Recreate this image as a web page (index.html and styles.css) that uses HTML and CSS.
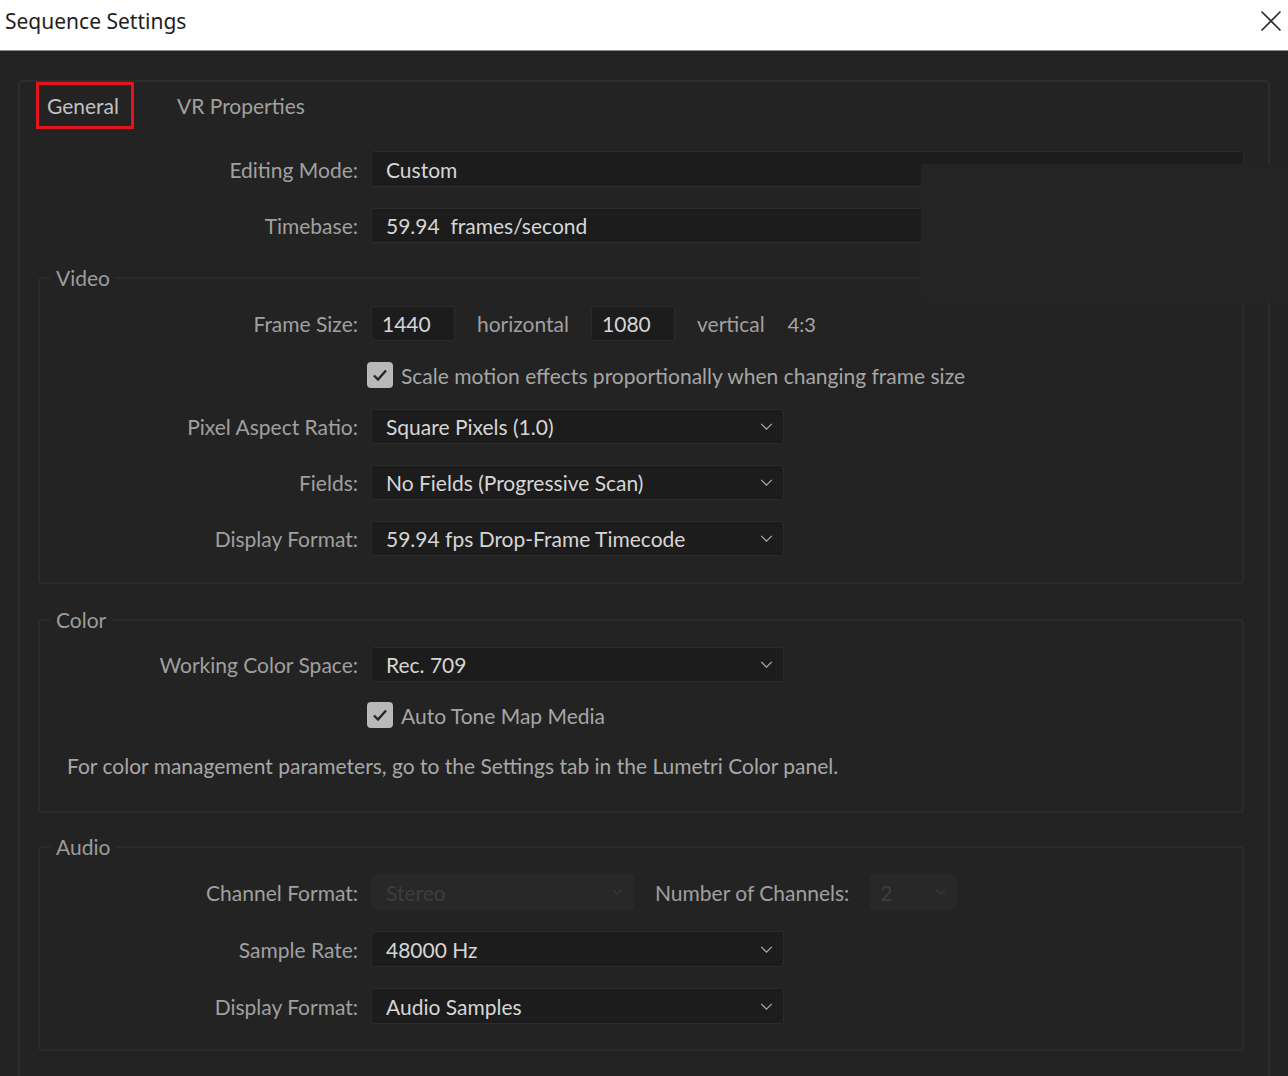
FILE: index.html
```html
<!DOCTYPE html>
<html lang="en">
<head>
    <meta charset="UTF-8">
    <meta name="viewport" content="width=device-width, initial-scale=1.0">
    <title>Sequence Settings</title>
    <link rel="stylesheet" href="styles.css">
</head>
<body>

    <div class="titlebar">
        <span class="title">Sequence Settings</span>
        <svg class="close" width="22" height="22" viewBox="0 0 22 22">
            <path d="M1.5 1.5 L20.5 20.5 M20.5 1.5 L1.5 20.5" stroke="#2b2b2b" stroke-width="1.6" fill="none"/>
        </svg>
    </div>

    <div class="main">
        <div class="panel">
            <div class="tabs">
                <span class="tab active">General</span>
                <span class="tab">VR Properties</span>
            </div>

            <div class="top-rows">
                <div class="row">
                    <label class="label">Editing Mode:</label>
                    <div class="field wide">Custom</div>
                </div>
                <div class="row">
                    <label class="label">Timebase:</label>
                    <div class="field wide timebase">59.94&nbsp; frames/second</div>
                </div>
            </div>

            <fieldset class="group">
                <legend>Video</legend>
                <div class="row">
                    <label class="label">Frame Size:</label>
                    <div class="field num">1440</div>
                    <span class="unit">horizontal</span>
                    <div class="field num">1080</div>
                    <span class="unit">vertical</span>
                    <span class="ratio">4:3</span>
                </div>
                <div class="row check-row">
                    <span class="check"><svg width="16" height="14" viewBox="0 0 16 14"><path d="M2 7.5 L6 11.5 L14 2.5" stroke="#262626" stroke-width="2.4" fill="none"/></svg></span>
                    <span class="check-text">Scale motion effects proportionally when changing frame size</span>
                </div>
                <div class="row">
                    <label class="label">Pixel Aspect Ratio:</label>
                    <div class="field select">Square Pixels (1.0)<svg class="chev" width="13" height="7" viewBox="0 0 14 8"><path d="M1 1 L7 7 L13 1" stroke="#a8a8a8" stroke-width="1.5" fill="none"/></svg></div>
                </div>
                <div class="row">
                    <label class="label">Fields:</label>
                    <div class="field select">No Fields (Progressive Scan)<svg class="chev" width="13" height="7" viewBox="0 0 14 8"><path d="M1 1 L7 7 L13 1" stroke="#a8a8a8" stroke-width="1.5" fill="none"/></svg></div>
                </div>
                <div class="row">
                    <label class="label">Display Format:</label>
                    <div class="field select">59.94 fps Drop-Frame Timecode<svg class="chev" width="13" height="7" viewBox="0 0 14 8"><path d="M1 1 L7 7 L13 1" stroke="#a8a8a8" stroke-width="1.5" fill="none"/></svg></div>
                </div>
            </fieldset>

            <fieldset class="group color">
                <legend>Color</legend>
                <div class="row">
                    <label class="label">Working Color Space:</label>
                    <div class="field select">Rec. 709<svg class="chev" width="13" height="7" viewBox="0 0 14 8"><path d="M1 1 L7 7 L13 1" stroke="#a8a8a8" stroke-width="1.5" fill="none"/></svg></div>
                </div>
                <div class="row check-row">
                    <span class="check"><svg width="16" height="14" viewBox="0 0 16 14"><path d="M2 7.5 L6 11.5 L14 2.5" stroke="#262626" stroke-width="2.4" fill="none"/></svg></span>
                    <span class="check-text">Auto Tone Map Media</span>
                </div>
                <p class="note">For color management parameters, go to the Settings tab in the Lumetri Color panel.</p>
            </fieldset>

            <fieldset class="group audio">
                <legend>Audio</legend>
                <div class="row">
                    <label class="label">Channel Format:</label>
                    <div class="field select disabled channel">Stereo<svg class="chev" width="11" height="6" viewBox="0 0 14 8"><path d="M1 1 L7 7 L13 1" stroke="#3a3a3a" stroke-width="1.5" fill="none"/></svg></div>
                    <span class="unit channels">Number of Channels:</span>
                    <div class="field select disabled count">2<svg class="chev" width="11" height="6" viewBox="0 0 14 8"><path d="M1 1 L7 7 L13 1" stroke="#3a3a3a" stroke-width="1.5" fill="none"/></svg></div>
                </div>
                <div class="row">
                    <label class="label">Sample Rate:</label>
                    <div class="field select">48000 Hz<svg class="chev" width="13" height="7" viewBox="0 0 14 8"><path d="M1 1 L7 7 L13 1" stroke="#a8a8a8" stroke-width="1.5" fill="none"/></svg></div>
                </div>
                <div class="row">
                    <label class="label">Display Format:</label>
                    <div class="field select">Audio Samples<svg class="chev" width="13" height="7" viewBox="0 0 14 8"><path d="M1 1 L7 7 L13 1" stroke="#a8a8a8" stroke-width="1.5" fill="none"/></svg></div>
                </div>
            </fieldset>
        </div>

        <div class="patch"></div>
    </div>

</body>
</html>
```

FILE: styles.css
```css
body { margin: 0; height: 100vh; overflow: hidden; background: #232323; font-family: Lato, "Open Sans", sans-serif; font-size: 21px; color: #a4a4a4; }

.titlebar { box-sizing: border-box; height: 51px; background: #fff; border-bottom: 1px solid #8c8c8c; display: flex; align-items: flex-start; justify-content: space-between; padding: 6px 6px 0 5px; }
.title { font-family: "Noto Sans", sans-serif; font-size: 21px; line-height: 30px; color: #1e1e1e; }
.close { margin-top: 4px; }

.main { position: relative; padding: 29px 18px 0 18px; }
.panel { border: 2px solid #2c2c2c; border-bottom: none; border-radius: 5px 5px 0 0; height: 1100px; padding: 0 24px 0 0; }

.tabs { display: flex; align-items: center; height: 47px; }
.tab { color: #a0a0a0; }
.tab.active { box-sizing: border-box; height: 47px; display: flex; align-items: center; margin-left: 16px; padding: 0 12px 0 8px; border: 3px solid #e3141c; color: #c2c2c2; }
.tab + .tab { margin-left: 43px; }

.row { display: flex; align-items: center; }
.label { width: 338px; flex: none; margin-right: 13px; text-align: right; color: #a0a0a0; }
.top-rows { margin-top: 22px; display: flex; flex-direction: column; gap: 21px; }

.field { box-sizing: border-box; height: 35px; background: #1c1c1c; border: 1px solid #2b2b2b; border-radius: 3px; display: flex; align-items: center; padding: 0 14px; color: #d6d6d6; }
.field.wide { flex: 1; height: 36px; }
.field.timebase { height: 35px; }
.field.num { width: 84px; padding: 0 10px; }
.field.select { width: 413px; justify-content: space-between; padding-right: 10px; }
.field.disabled { background: #282828; border-color: #282828; color: #3d3d3d; }
.field.channel { width: 263px; }
.field.count { width: 87px; padding-left: 9px; }
.chev { flex: none; }

.unit { margin: 0 22px; color: #a0a0a0; }
.unit.channels { margin: 0 21px; }
.ratio { margin-left: 1px; color: #a8a8a8; font-size: 20px; }

.group { margin: 23px 0 0 18px; padding: 16px 0 26px 0; border: 2px solid #2b2b2b; border-radius: 4px; display: flex; flex-direction: column; gap: 21px; }
.group + .group { margin-top: 24px; }
.group legend { margin-left: 10px; padding: 0 6px; line-height: 24px; color: #9c9c9c; }
.group .label { width: 318px; }
.group.color { padding-top: 15px; padding-bottom: 32px; gap: 20px; }
.group.audio { margin-top: 22px; padding-top: 15px; padding-bottom: 25px; gap: 21px; }
.group.audio .field { height: 36px; }

.check-row { padding-left: 327px; height: 26px; }
.check { box-sizing: border-box; width: 26px; height: 26px; border-radius: 4px; background: #b9b9b9; display: flex; align-items: center; justify-content: center; margin-right: 8px; }
.check-text { color: #a6a6a6; }

.note { margin: 5px 0 0 27px; line-height: 26px; color: #a8a8a8; }

.patch { position: absolute; left: 921px; top: 113px; width: 367px; height: 138px; background: #242424; }
```
